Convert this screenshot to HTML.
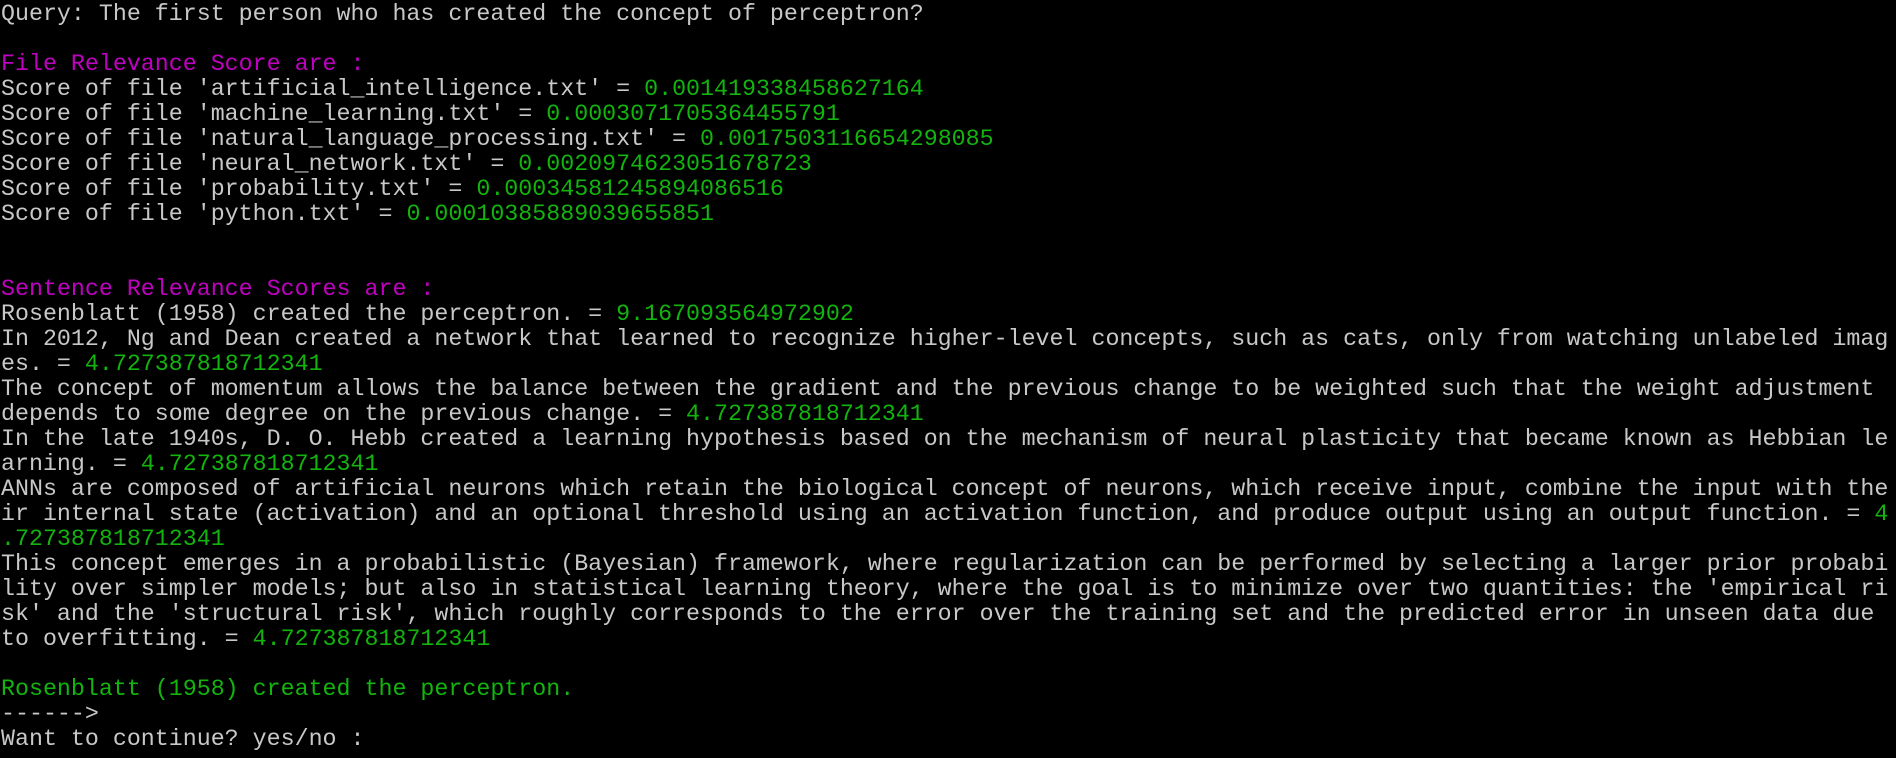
<!DOCTYPE html>
<html><head><meta charset="utf-8"><style>
html,body{margin:0;padding:0;background:#000;width:1896px;height:758px;overflow:hidden}
pre{margin:0;position:absolute;left:1px;top:2px;font-family:"Liberation Mono",monospace;font-size:23.3px;line-height:25px;color:#c8c8c8;white-space:pre}
.m{color:#c000c0}.g{color:#13b40e}
</style></head><body>
<pre>Query: The first person who has created the concept of perceptron?

<span class="m">File Relevance Score are :</span>
Score of file 'artificial_intelligence.txt' = <span class="g">0.001419338458627164</span>
Score of file 'machine_learning.txt' = <span class="g">0.0003071705364455791</span>
Score of file 'natural_language_processing.txt' = <span class="g">0.0017503116654298085</span>
Score of file 'neural_network.txt' = <span class="g">0.0020974623051678723</span>
Score of file 'probability.txt' = <span class="g">0.00034581245894086516</span>
Score of file 'python.txt' = <span class="g">0.00010385889039655851</span>


<span class="m">Sentence Relevance Scores are :</span>
Rosenblatt (1958) created the perceptron. = <span class="g">9.167093564972902</span>
In 2012, Ng and Dean created a network that learned to recognize higher-level concepts, such as cats, only from watching unlabeled imag
es. = <span class="g">4.727387818712341</span>
The concept of momentum allows the balance between the gradient and the previous change to be weighted such that the weight adjustment
depends to some degree on the previous change. = <span class="g">4.727387818712341</span>
In the late 1940s, D. O. Hebb created a learning hypothesis based on the mechanism of neural plasticity that became known as Hebbian le
arning. = <span class="g">4.727387818712341</span>
ANNs are composed of artificial neurons which retain the biological concept of neurons, which receive input, combine the input with the
ir internal state (activation) and an optional threshold using an activation function, and produce output using an output function. = <span class="g">4</span>
<span class="g">.727387818712341</span>
This concept emerges in a probabilistic (Bayesian) framework, where regularization can be performed by selecting a larger prior probabi
lity over simpler models; but also in statistical learning theory, where the goal is to minimize over two quantities: the 'empirical ri
sk' and the 'structural risk', which roughly corresponds to the error over the training set and the predicted error in unseen data due
to overfitting. = <span class="g">4.727387818712341</span>

<span class="g">Rosenblatt (1958) created the perceptron.</span>
------&gt;
Want to continue? yes/no :</pre>
</body></html>
